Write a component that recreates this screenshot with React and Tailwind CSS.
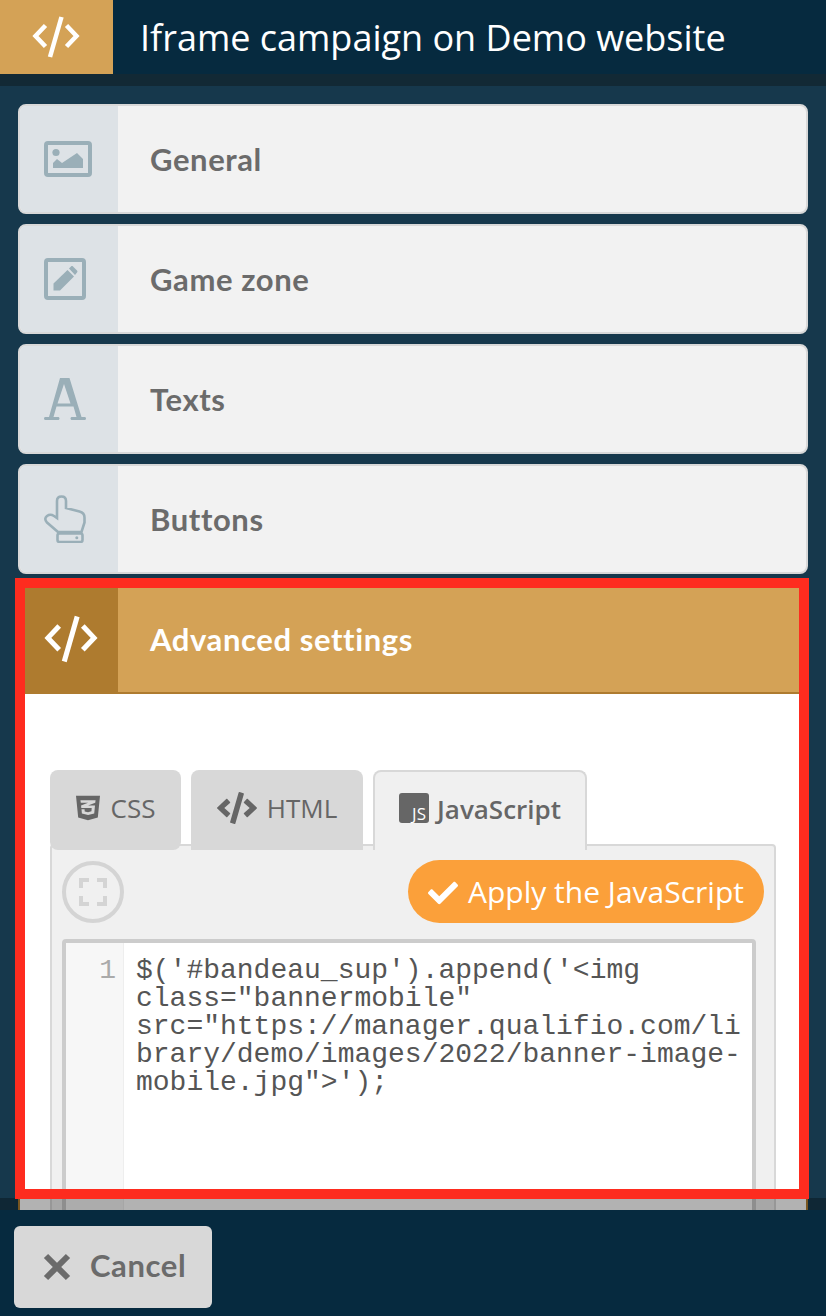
import { FaCss3Alt, FaCode, FaCheck } from "react-icons/fa";

const RALEWAY = "font-['Lato','Liberation_Sans',sans-serif] tracking-[0.6px]";

function CodeIcon({ className }) {
  return (
    <svg viewBox="0 0 48 42" className={className} fill="none" stroke="currentColor" strokeWidth="4.5">
      <path d="M13.5 9.5 3.5 20l10 10.5" />
      <path d="M29.5 1 18 41" />
      <path d="M34.5 9.5 44.5 20l-10 10.5" />
    </svg>
  );
}

function ImageIcon() {
  return (
    <svg viewBox="44 141 48 36" className="w-[48px] h-[36px] text-[#9aafb8]" fill="currentColor">
      <rect x="46" y="143" width="44" height="32" rx="2" fill="none" stroke="currentColor" strokeWidth="4" />
      <circle cx="56" cy="152.5" r="3.6" />
      <path d="M53 168v-5l4-4 5 4 15-10 6 6v9z" />
    </svg>
  );
}

function EditIcon() {
  return (
    <svg viewBox="44 258 42 42" className="w-[42px] h-[42px] text-[#9aafb8]" fill="currentColor">
      <rect x="46" y="260" width="38" height="38" rx="2" fill="none" stroke="currentColor" strokeWidth="4" />
      <path d="M53.5 290.5v-7L67.5 270l6.5 6.5-14 14z" />
      <path d="M69 268.5l2-2c.7-.6 1.4-.6 2 0l4 4c.6.6.6 1.3 0 2l-2 2.5z" />
    </svg>
  );
}

function LetterIcon() {
  return (
    <svg viewBox="44 378 42 42" className="w-[42px] h-[42px] text-[#9aafb8]" fill="currentColor" fillRule="evenodd">
      <path d="M60 378h9.500l12 39h3c1 0 1.500.7 1.500 1.500s-.5 1.500-1.500 1.500H72c-1 0-1.500-.7-1.500-1.500s.5-1.500 1.500-1.500h4.500l-3-10.500H56.500L53.500 417H58c1 0 1.500.7 1.500 1.500S59 420 58 420H45.500c-1 0-1.500-.7-1.500-1.500s.5-1.500 1.500-1.500h3.500zM64 384 57.500 403.500h13z" />
    </svg>
  );
}

function HandIcon() {
  return (
    <svg viewBox="44 495 42 48" className="w-[42px] h-[48px] text-[#9aafb8]" fill="none" stroke="currentColor" strokeWidth="2.6">
      <path d="M58 532 47 522.500c-2.500-2.500-2-5 0-6.500 2.300-1.700 5-1.300 7 0l3 2v-17c0-3 2-4.500 4.500-4.500s4.500 1.500 4.500 4.500v7l13.500 3.500c3 .8 5 3 5 6v5l-3 9.500z" />
      <rect x="57.500" y="533.500" width="25" height="8.500" rx="2" />
      <circle cx="76.800" cy="537.800" r="1.500" fill="currentColor" stroke="none" />
    </svg>
  );
}

function Row({ icon, label }) {
  return (
    <div className="h-[110px] shrink-0 flex border-2 border-[#d8d8d8] rounded-lg bg-[#f2f2f2] overflow-hidden">
      <div className="w-[98px] bg-[#dde2e6] flex items-center pl-[24px]">{icon}</div>
      <div className={`flex items-center pl-[32px] text-[31px] font-bold text-[#6b6b6b] ${RALEWAY}`}>{label}</div>
    </div>
  );
}

const CODE = `$('#bandeau_sup').append('<img class="bannermobile" src="https://manager.qualifio.com/library/demo/images/2022/banner-image-mobile.jpg">');`;

export default function App() {
  return (
    <div className="relative h-[1316px] w-[826px] overflow-hidden flex flex-col bg-[#16384c] font-['Open_Sans',sans-serif]">
      <header className="h-[74px] shrink-0 flex items-center bg-[#062a3f]">
        <div className="w-[113px] h-full bg-[#d4a256] flex items-center pl-[32px]">
          <CodeIcon className="w-[48px] h-[42px] text-white" />
        </div>
        <h1 className="pl-[27px] pt-[2px] text-[36px] text-white">Iframe campaign on Demo website</h1>
      </header>
      <div className="h-[12px] shrink-0 bg-[#122935]" />

      <main className="flex-1 min-h-0 overflow-hidden px-[18px] pt-[18px] flex flex-col gap-[10px]">
        <Row icon={<ImageIcon />} label="General" />
        <Row icon={<EditIcon />} label="Game zone" />
        <Row icon={<LetterIcon />} label="Texts" />
        <Row icon={<HandIcon />} label="Buttons" />

        <section className="shrink-0 border-2 border-[#ae7b2f] bg-white">
          <div className="h-[108px] flex bg-[#d4a256] border-b-2 border-[#ae7b2f]">
            <div className="w-[98px] bg-[#ae7b2f] flex items-center pl-[24px]">
              <CodeIcon className="w-[54px] h-[48px] text-white" />
            </div>
            <div className={`flex items-center pl-[32px] text-[31px] font-bold text-white ${RALEWAY}`}>Advanced settings</div>
          </div>

          <div className="px-[30px] pt-[76px]">
            <div className="relative z-10 flex gap-[10px] -mb-[6px]">
              <div className="w-[131px] h-[80px] rounded-lg bg-[#d8d8d8] flex items-center justify-center gap-[11px] text-[26px] text-[#666] pb-[3px]">
                <FaCss3Alt preserveAspectRatio="none" className="w-[24px] h-[28px] -mt-[1px]" />
                CSS
              </div>
              <div className="w-[172px] h-[80px] rounded-t-lg bg-[#d8d8d8] flex items-center justify-center gap-[10px] text-[26px] text-[#666] pb-[3px]">
                <FaCode className="text-[40px] -mt-[1px]" />
                HTML
              </div>
              <div className="w-[214px] h-[80px] rounded-t-lg border-2 border-b-0 border-[#d8d8d8] bg-[#f0f0f0] flex items-center justify-center gap-[8px] text-[26px] font-semibold text-[#666] pb-[3px]">
                <span className="w-[30px] h-[30px] rounded-[3px] bg-[#666] text-white text-[17px] font-normal leading-none flex items-end justify-end pr-[3px] pb-[1px] -mt-[3px]">JS</span>
                JavaScript
              </div>
            </div>

            <div className="border-2 border-[#d8d8d8] rounded-[4px] bg-[#f0f0f0] pt-[14px] pl-[10px]">
              <div className="flex items-center justify-between pr-[10px]">
                <button className="w-[62px] h-[62px] rounded-full border-4 border-[#d4d4d4] flex items-center justify-center">
                  <svg viewBox="0 0 28 28" className="w-[28px] h-[28px]" fill="none" stroke="#d4d4d4" strokeWidth="4">
                    <path d="M2 10V2h8M18 2h8v8M26 18v8h-8M10 26H2v-8" />
                  </svg>
                </button>
                <button className="w-[356px] h-[63px] rounded-full bg-[#fba03a] flex items-center justify-center gap-[10px] text-[30px] text-white">
                  <FaCheck className="text-[30px] mt-[3px]" />
                  Apply the JavaScript
                </button>
              </div>

              <div className="mt-[16px] mr-[18px] h-[400px] flex border-4 border-[#ccc] rounded-[4px] bg-white font-['Liberation_Mono',monospace] text-[28px] leading-[28px]">
                <div className="w-[58px] shrink-0 bg-[#f7f7f7] border-r border-[#eee] text-right text-[#aaa] pr-[7px] pt-[14px]">1</div>
                <pre className="pl-[12px] pr-[8px] pt-[14px] flex-1 min-w-0 text-[#555] whitespace-pre-wrap [overflow-wrap:anywhere] font-['Liberation_Mono',monospace]">{CODE}</pre>
              </div>
            </div>
          </div>
        </section>
      </main>

      <footer className="relative z-10 h-[106px] shrink-0 bg-[#062a3f] pt-[16px] pl-[14px]">
        <div className="absolute left-0 right-0 -top-[12px] h-[12px] bg-black/30" />
        <button className={`w-[198px] h-[82px] rounded-md bg-[#d8d8d8] flex items-center pl-[28px] gap-[18px] text-[31px] font-bold text-[#6b6b6b] ${RALEWAY}`}>
          <svg viewBox="0 0 30 30" className="w-[30px] h-[30px]" fill="none" stroke="currentColor" strokeWidth="6">
            <path d="M4 4l22 22M26 4 4 26" />
          </svg>
          <span className="-mt-[3px]">Cancel</span>
        </button>
      </footer>

      <div className="absolute z-20 left-[15px] top-[578px] w-[794px] h-[621px] border-[10px] border-[#fe2c1f] pointer-events-none" />
    </div>
  );
}
